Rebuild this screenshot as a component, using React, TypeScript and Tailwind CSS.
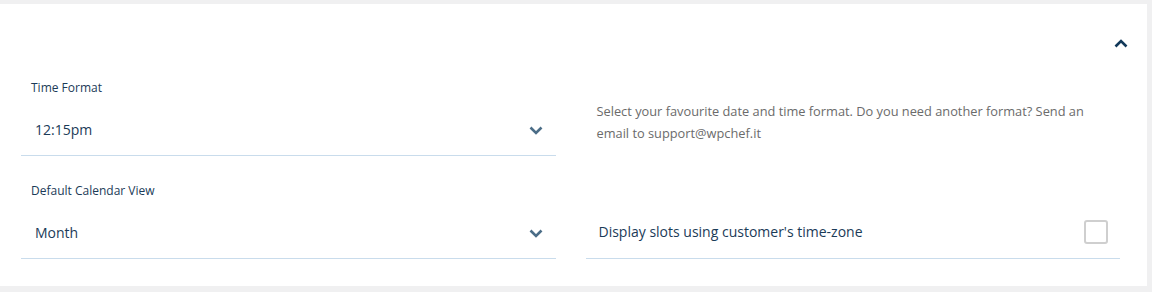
import React from "react";

const ChevronDown = () => (
  <svg width="14" height="9" viewBox="0 0 14 9" fill="none">
    <path d="M1.5 1.5 L7 7 L12.5 1.5" stroke="#4b6d87" strokeWidth="2.6" strokeLinecap="butt" strokeLinejoin="miter" />
  </svg>
);

const ChevronUp = () => (
  <svg width="14" height="9" viewBox="0 0 14 9" fill="none">
    <path d="M1.5 7.5 L7 2 L12.5 7.5" stroke="#12395a" strokeWidth="2.6" strokeLinecap="butt" strokeLinejoin="miter" />
  </svg>
);

function SelectField({ label, value }: { label: string; value: string }) {
  return (
    <div className="flex flex-col">
      <div className="h-[16px] pl-[10px] text-[12px] leading-[16px] text-[#1b3b58]">{label}</div>
      <div className="mt-[9px] flex h-[51px] items-center justify-between border-b border-[#c9dcec] pl-[14px] pr-[13px]">
        <span className="text-[14px] leading-[20px] text-[#1b3b58]">{value}</span>
        <ChevronDown />
      </div>
    </div>
  );
}

export default function App() {
  return (
    <div
      className="min-h-[292px] w-full bg-[#f0f0f1] pb-[6px] pr-[5px] pt-[4px]"
      style={{ fontFamily: '"Open Sans", "Noto Sans", sans-serif' }}
    >
      <div className="bg-white pb-[27px] pl-[21px] pr-[27px]">
        <div className="flex h-[76px] items-center justify-end">
          <div className="mr-[-8px] mt-[3px]">
            <ChevronUp />
          </div>
        </div>
        <div className="grid grid-cols-2 gap-x-[30px] gap-y-[27px]">
          <SelectField label="Time Format" value="12:15pm" />
          <div className="pl-[11px] pr-[26px] pt-[20px] text-[12.8px] leading-[22px] text-[#6b6b6b]">
            Select your favourite date and time format. Do you need another format? Send an email to support@wpchef.it
          </div>
          <SelectField label="Default Calendar View" value="Month" />
          <div className="flex flex-col">
            <div className="h-[16px]" />
            <div className="mt-[9px] flex h-[51px] items-center justify-between border-b border-[#c9dcec] pl-[13px] pr-[12px]">
              <span className="pb-[3px] text-[14px] leading-[20px] text-[#1b3b58]">Display slots using customer's time-zone</span>
              <span className="mb-[2px] block h-[24px] w-[24px] rounded-[3px] border-2 border-[#cfcfcf] bg-white" />
            </div>
          </div>
        </div>
      </div>
    </div>
  );
}
